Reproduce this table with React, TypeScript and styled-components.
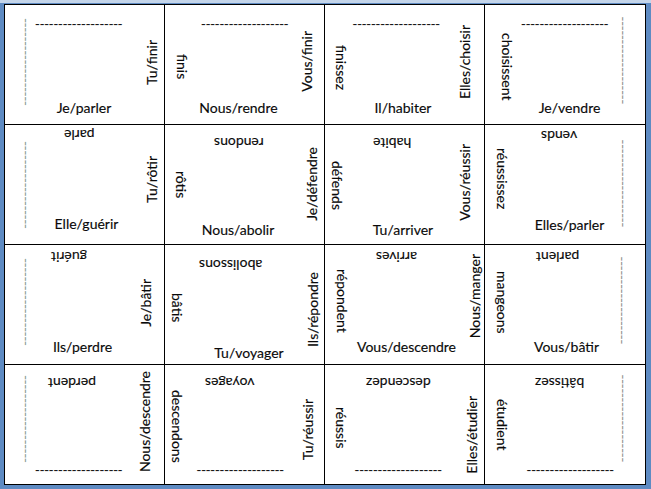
import React from 'react';
import styled, { createGlobalStyle, css } from 'styled-components';

const Global = createGlobalStyle`
  html, body { margin: 0; padding: 0; }
  body {
    background: #5e8bc3;
    font-family: Lato, "Liberation Sans", sans-serif;
  }
`;

const Frame = styled.div`
  width: 651px;
  height: 489px;
  box-sizing: border-box;
  padding: 4px 5px 4px 4px;
  background: linear-gradient(#c4d5ea 0 3px, #5e8bc3 3px);
`;

const Table = styled.div`
  display: grid;
  grid-template-columns: 159px 159px 159px 160px;
  grid-template-rows: repeat(4, 119px);
  gap: 1px;
  width: 642px;
  box-sizing: border-box;
  background: #000;
  border: 1px solid #000;
`;

const Card = styled.div`
  background: #fff;
  display: grid;
  grid-template: 1fr / 1fr;
  overflow: hidden;
  font-size: 14px;
  line-height: 18px;
  color: #0a0a0a;
  -webkit-text-stroke: 0.15px #0a0a0a;
`;

type Side = 'top' | 'bottom' | 'left' | 'right';

const H = 119;
const HALF = 9;

const Label = styled.span<{ $side: Side; $cx: number; $cy: number; $w: number; $dash?: boolean }>`
  grid-area: 1 / 1;
  white-space: nowrap;
  ${(p) => {
    if (p.$side === 'top' || p.$side === 'bottom') {
      const shift = p.$cx - p.$w / 2;
      const ml = Math.max(0, 2 * shift);
      const mr = Math.max(0, -2 * shift);
      return p.$side === 'top'
        ? css`
            justify-self: center;
            align-self: start;
            margin: ${p.$cy - HALF}px ${mr}px 0 ${ml}px;
            transform: ${p.$dash ? 'none' : 'rotate(180deg)'};
          `
        : css`
            justify-self: center;
            align-self: end;
            margin: 0 ${mr}px ${H - p.$cy - HALF}px ${ml}px;
          `;
    }
    const dy = p.$cy - H / 2;
    const mt = Math.max(0, 2 * dy);
    const mb = Math.max(0, -2 * dy);
    return p.$side === 'left'
      ? css`
          writing-mode: vertical-rl;
          justify-self: start;
          align-self: center;
          margin: ${mt}px 0 ${mb}px ${p.$cx - HALF}px;
        `
      : css`
          writing-mode: vertical-rl;
          justify-self: end;
          align-self: center;
          margin: ${mt}px ${p.$w - p.$cx - HALF}px ${mb}px 0;
          transform: rotate(180deg);
        `;
  }}
  ${(p) =>
    p.$dash &&
    css`
      letter-spacing: -0.6px;
      -webkit-text-stroke: 0;
      color: ${p.$side === 'left' ? '#879890' : p.$side === 'right' ? '#8d8d8d' : '#111'};
    `}
`;

const DASH = '-------------------';

type Item = { t: string; cx: number; cy: number };
type CellData = { top: Item; left: Item; bottom: Item; right: Item };

const it = (t: string, cx: number, cy: number): Item => ({ t, cx, cy });

const cells: CellData[] = [
  // Row 1
  { top: it(DASH, 73.5, 19), left: it(DASH, 20.7, 56.5), bottom: it('Je/parler', 79, 103), right: it('Tu/finir', 147, 57.5) },
  { top: it(DASH, 79.5, 19), left: it('finis', 16.7, 62), bottom: it('Nous/rendre', 73.5, 103), right: it('Vous/finir', 141.7, 56.5) },
  { top: it(DASH, 71, 19), left: it('finissez', 15.7, 62.5), bottom: it('Il/habiter', 78, 103), right: it('Elles/choisir', 140, 57.5) },
  { top: it(DASH, 79.5, 19), left: it('choisissent', 21.7, 61.5), bottom: it('Je/vendre', 84.5, 103), right: it(DASH, 136.7, 55.5) },
  // Row 2
  { top: it('parle', 74.5, 10), left: it(DASH, 20.7, 60), bottom: it('Elle/guérir', 81.5, 99), right: it('Tu/rôtir', 147, 54.5) },
  { top: it('rendons', 73.5, 18), left: it('rôtis', 16, 60), bottom: it('Nous/abolir', 73, 105), right: it('Je/défendre', 146.7, 59) },
  { top: it('habite', 67.5, 18), left: it('défends', 12, 60), bottom: it('Tu/arriver', 78, 105), right: it('Vous/réussir', 140, 57.5) },
  { top: it('vends', 74.5, 11), left: it('réussissez', 16.7, 54), bottom: it('Elles/parler', 84.5, 100), right: it(DASH, 136.7, 58.5) },
  // Row 3
  { top: it('guérit', 64, 12), left: it(DASH, 20.7, 56.5), bottom: it('Ils/perdre', 77.5, 102), right: it('Je/bâtir', 140.7, 57.5) },
  { top: it('abolissons', 65.5, 20), left: it('bâtis', 12, 62.5), bottom: it('Tu/voyager', 84, 108), right: it('Ils/répondre', 148, 64) },
  { top: it('arrives', 71.5, 12), left: it('répondent', 16.7, 56), bottom: it('Vous/descendre', 81.5, 102), right: it('Nous/manger', 150, 51.5) },
  { top: it('parlent', 73, 12), left: it('mangeons', 16.7, 57.5), bottom: it('Vous/bâtir', 81.5, 102), right: it(DASH, 136, 55.5) },
  // Row 4
  { top: it('perdent', 67, 18), left: it(DASH, 20.7, 54), bottom: it(DASH, 73.5, 105), right: it('Nous/descendre', 140, 56.5) },
  { top: it('voyages', 65, 18), left: it('descendons', 12, 61.5), bottom: it(DASH, 75, 105), right: it('Tu/réussir', 143, 65) },
  { top: it('descendez', 73, 18), left: it('réussis', 16, 62.5), bottom: it(DASH, 73, 105), right: it('Elles/étudier', 147, 70) },
  { top: it('bâtissez', 75, 18), left: it('étudient', 16.7, 60), bottom: it(DASH, 85, 105), right: it(DASH, 136.7, 53.5) },
];

const sides: Side[] = ['top', 'left', 'bottom', 'right'];

export default function App() {
  return (
    <>
      <Global />
      <Frame>
        <Table>
          {cells.map((c, i) => {
            const w = i % 4 === 3 ? 160 : 159;
            return (
              <Card key={i}>
                {sides.map((s) => {
                  const item = c[s];
                  return (
                    <Label
                      key={s}
                      $side={s}
                      $cx={item.cx}
                      $cy={item.cy}
                      $w={w}
                      $dash={item.t === DASH}
                    >
                      {item.t}
                    </Label>
                  );
                })}
              </Card>
            );
          })}
        </Table>
      </Frame>
    </>
  );
}
